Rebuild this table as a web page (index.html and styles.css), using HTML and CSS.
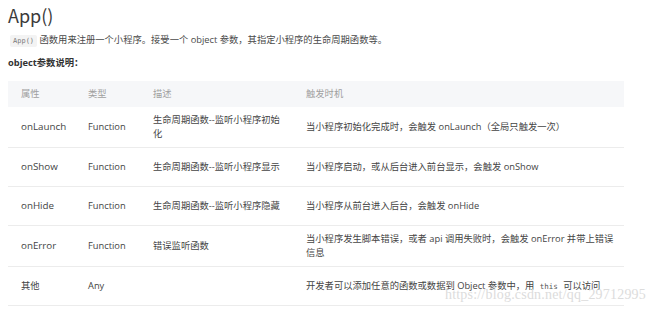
FILE: index.html
```html
<!DOCTYPE html>
<html lang="zh">
<head>
<meta charset="utf-8">
<title>App()</title>
<link rel="stylesheet" href="styles.css">
</head>
<body>
<main class="doc">
  <h1 class="title">App()</h1>
  <p class="intro"><code class="code">App()</code> 函数用来注册一个小程序。接受一个 object 参数，其指定小程序的生命周期函数等。</p>
  <p class="subhead">object参数说明：</p>
  <table class="params">
    <colgroup>
      <col class="c1"><col class="c2"><col class="c3"><col class="c4">
    </colgroup>
    <thead>
      <tr><th>属性</th><th>类型</th><th>描述</th><th>触发时机</th></tr>
    </thead>
    <tbody>
      <tr><td class="name">onLaunch</td><td>Function</td><td>生命周期函数--监听小程序初始化</td><td>当小程序初始化完成时，会触发 onLaunch（全局只触发一次）</td></tr>
      <tr><td class="name">onShow</td><td>Function</td><td>生命周期函数--监听小程序显示</td><td>当小程序启动，或从后台进入前台显示，会触发 onShow</td></tr>
      <tr><td class="name">onHide</td><td>Function</td><td>生命周期函数--监听小程序隐藏</td><td>当小程序从前台进入后台，会触发 onHide</td></tr>
      <tr><td class="name">onError</td><td>Function</td><td>错误监听函数</td><td>当小程序发生脚本错误，或者 api 调用失败时，会触发 onError 并带上错误信息</td></tr>
      <tr><td>其他</td><td>Any</td><td></td><td>开发者可以添加任意的函数或数据到 Object 参数中，用 <code class="code inline">this</code> 可以访问</td></tr>
    </tbody>
  </table>
  <div class="watermark">https://blog.csdn.net/qq_29712995</div>
</main>
</body>
</html>
```

FILE: styles.css
```css
html, body {
  margin: 0;
  padding: 0;
  background: #ffffff;
}
.doc {
  position: relative;
  width: 650px;
  height: 311px;
  overflow: hidden;
  padding: 0 8px;
  box-sizing: border-box;
  font-family: "Open Sans", "Noto Sans CJK SC", sans-serif;
  font-size: 9.3px;
  color: #4a4a4a;
}
.title {
  margin: 0;
  padding-top: 3px;
  font-family: "Noto Sans CJK SC", "Open Sans", sans-serif;
  font-size: 18px;
  font-weight: 400;
  line-height: 24px;
  color: #3a3a3a;
}
.intro {
  margin: 6px 0 0 2px;
  line-height: 14px;
}
.code {
  font-family: "DejaVu Sans Mono", monospace;
  font-size: 7px;
  color: #7a7a7a;
  background: #f3f3f3;
  padding: 2px 3px;
  border-radius: 2px;
}
.code.inline {
  background: transparent;
  font-size: 7.5px;
  color: #555;
}
.subhead {
  margin: 8px 0 0;
  font-weight: 700;
  line-height: 14px;
  color: #333;
}
.params {
  margin-top: 11px;
  width: 616px;
  border-collapse: collapse;
  table-layout: fixed;
}
.c1 { width: 67px; }
.c2 { width: 65px; }
.c3 { width: 153px; }
.c4 { width: 331px; }
.params th {
  background: #f6f7f9;
  color: #a0a0a0;
  font-weight: 400;
  text-align: left;
  height: 26px;
  padding: 0 6px 0 13px;
  line-height: 14px;
}
.params td {
  height: 26px;
  padding: 6px 6px 6px 13px;
  line-height: 14px;
  border-bottom: 1px solid #ececec;
  vertical-align: middle;
  color: #444;
}
.params td.name {
  font-size: 9.8px;
}
.watermark {
  position: absolute;
  right: 4px;
  bottom: 8px;
  font-family: "Liberation Serif", serif;
  font-size: 14px;
  color: #dcdcdc;
  letter-spacing: 0.2px;
}
```
